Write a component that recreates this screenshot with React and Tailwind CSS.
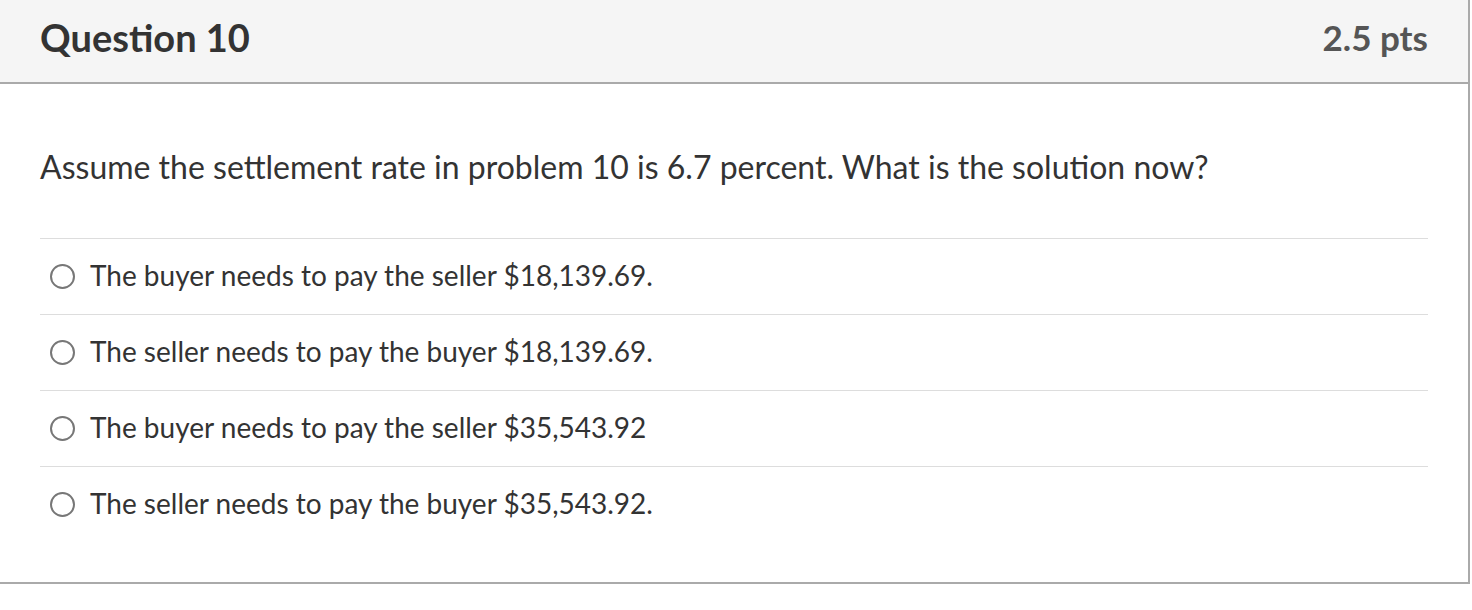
const answers = [
  "The buyer needs to pay the seller $18,139.69.",
  "The seller needs to pay the buyer $18,139.69.",
  "The buyer needs to pay the seller $35,543.92",
  "The seller needs to pay the buyer $35,543.92.",
]

const App = () => {
  return (
    <div className="bg-white min-h-[610px]" style={{ fontFamily: "Lato, 'Open Sans', sans-serif" }}>
      <div className="w-[1470px] border-r-2 border-b-2 border-[#aaaaaa]">
        <header className="h-[84px] bg-[#f5f5f5] border-b-2 border-[#aaaaaa] flex items-center justify-between px-10 pb-2">
          <h2 className="text-[38px] font-bold text-[#333333]">Question 10</h2>
          <span className="text-[35px] font-bold text-[#555555]">2.5 pts</span>
        </header>

        <div className="px-10 pt-[64px] pb-[40px]">
          <p className="text-[32px] leading-[38px] text-[#333333] mb-[52px]">
            Assume the settlement rate in problem 10 is 6.7 percent. What is the solution now?
          </p>

          <ul>
            {answers.map((a) => (
              <li key={a} className="h-[76px] border-t border-[#dddddd] flex items-center">
                <span className="ml-[10px] w-[25px] h-[25px] rounded-full border-2 border-[#777777] shrink-0" />
                <span className="ml-[15px] mb-[4px] text-[28px] text-[#333333]">{a}</span>
              </li>
            ))}
          </ul>
        </div>
      </div>
    </div>
  )
}

export default App
